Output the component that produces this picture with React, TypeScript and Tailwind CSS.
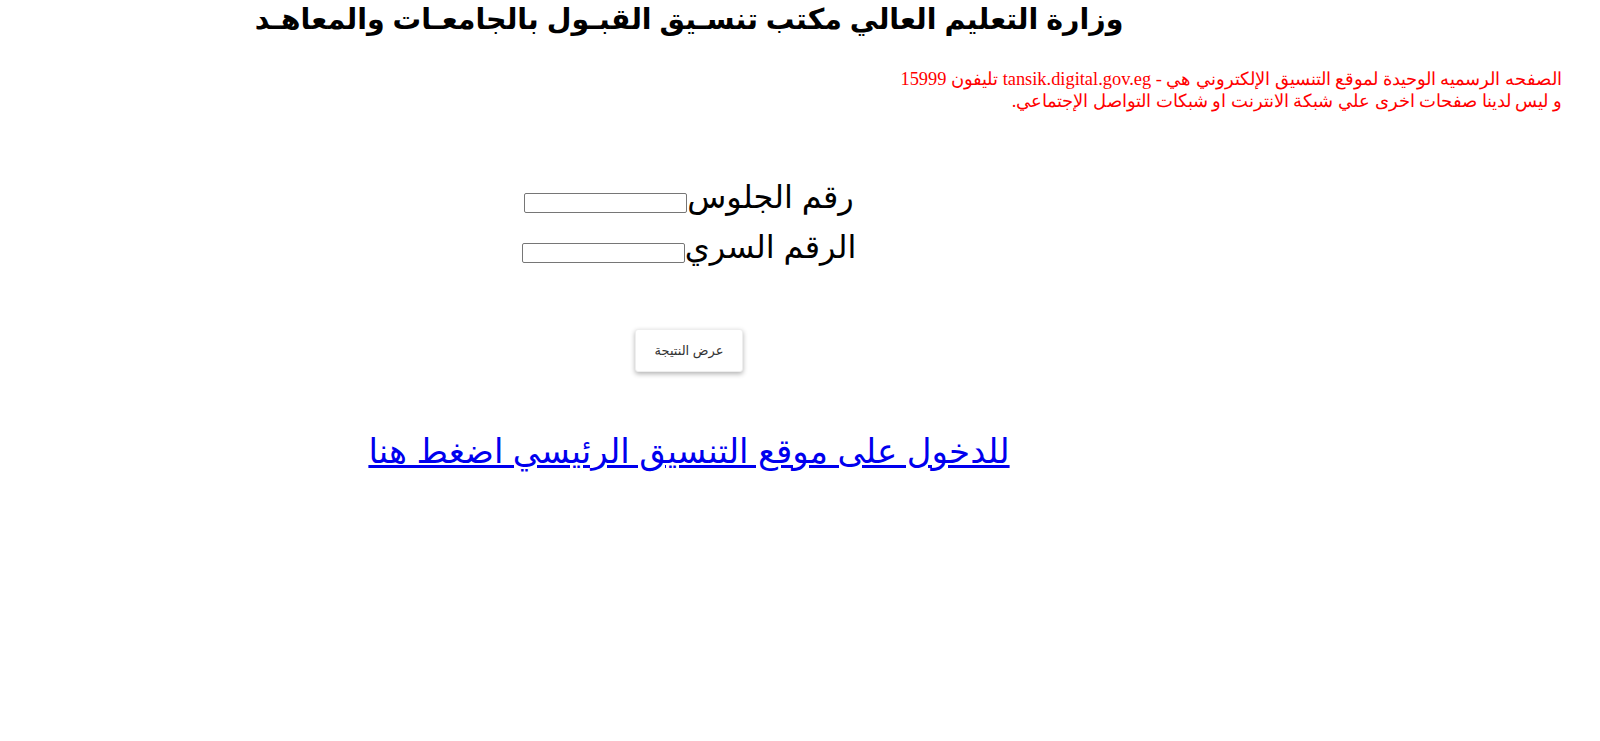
export default function App() {
  return (
    <div dir="rtl" className="w-[1600px] h-[741px] overflow-hidden bg-white text-black" style={{ fontFamily: '"Liberation Sans", "DejaVu Sans", Arial, sans-serif' }}>
      <div className="pr-[222px] text-center -mt-[1px]">
        <h1 className="text-[28.5px] leading-[40px] font-bold">وزارة التعليم العالي مكتب تنسـيق القبـول بالجامعـات والمعاهـد</h1>
      </div>

      <p className="mt-[29px] pr-[38px] text-right text-[18.4px] leading-[22px] text-[#ff0000]" style={{ fontFamily: '"Liberation Serif", "DejaVu Serif", serif' }}>
        الصفحه الرسميه الوحيدة لموقع التنسيق الإلكتروني هي - tansik.digital.gov.eg تليفون 15999
        <br />
        و ليس لدينا صفحات اخرى علي شبكة الانترنت او شبكات التواصل الإجتماعي.
      </p>

      <div className="pr-[222px] text-center mt-[55px]">
        <div className="flex items-end justify-center h-[50px]">
          <label className="text-[32px] leading-[40px]">رقم الجلوس</label>
          <input type="text" className="w-[163px] h-[20px] mb-[4px] border border-[#767676] rounded-[2px] bg-white" />
        </div>
        <div className="flex items-end justify-center h-[50px]">
          <label className="text-[32px] leading-[40px]">الرقم السري</label>
          <input type="password" className="w-[163px] h-[20px] mb-[4px] border border-[#767676] rounded-[2px] bg-white" />
        </div>

        <div className="mt-[62px] flex justify-center">
          <button className="w-[108px] h-[43px] bg-white rounded-[3px] text-[13px] text-[#333] shadow-[0_2px_5px_rgba(0,0,0,0.3)] border border-[#eee]">
            عرض النتيجة
          </button>
        </div>

        <div className="mt-[55px]">
          <a href="#" className="text-[34px] leading-[48px] text-[#0000ee] underline">للدخول على موقع التنسيق الرئيسي اضغط هنا</a>
        </div>
      </div>
    </div>
  );
}
